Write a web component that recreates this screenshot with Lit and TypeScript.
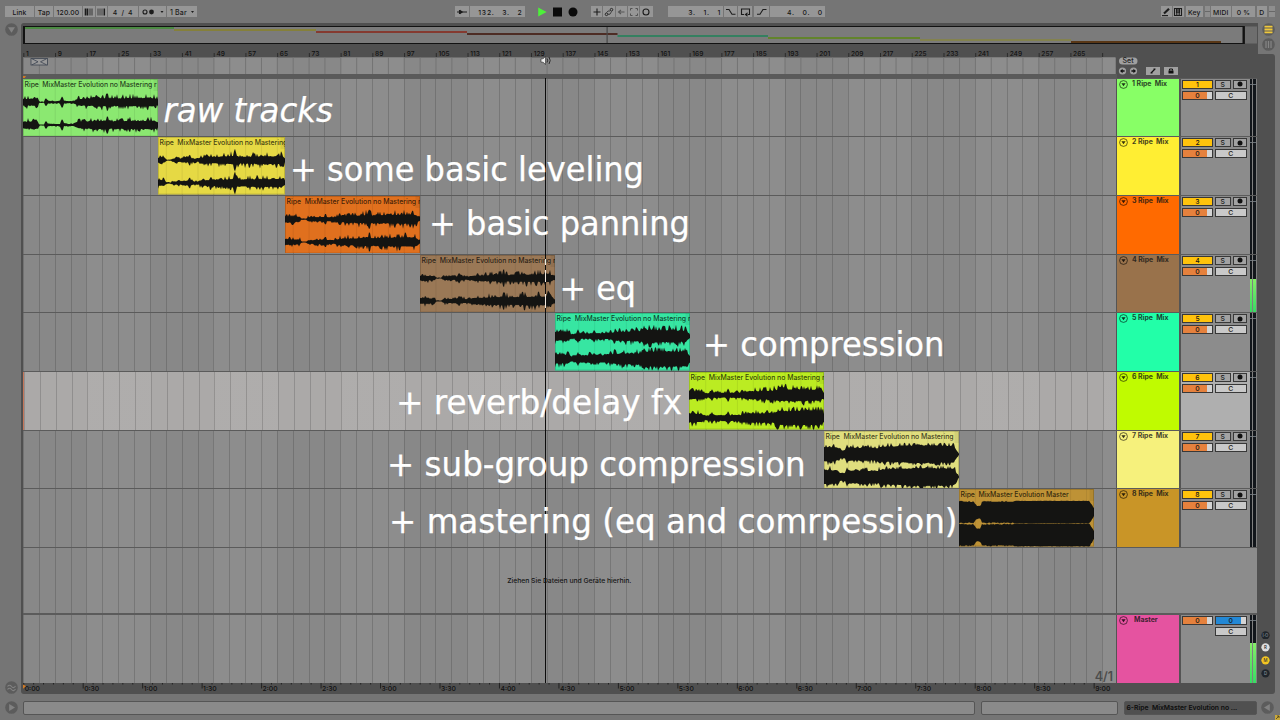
import { LitElement, html, svg, css, nothing } from "lit";
import { customElement, property } from "lit/decorators.js";

type Env = [number, number][];
interface Track {
  n: number; color: string; clip: string; x: number; end: number;
  title: string; titleW: number; top: Env; bottom?: Env; spikes: [number, number][]; jit: number; meter?: number;
}

const LEFT = 23;
const BAR8 = 31.73;
const NB = "\u00a0";
const FULL = `Ripe${NB} MixMaster Evolution no Mastering r`;

const quiet: Env = [[0, 4.4], [0.11, 4.4], [0.12, 0.6], [0.16, 0.6], [0.17, 1.6], [0.25, 1.2], [0.37, 1.2], [0.41, 4.2], [0.5, 4.8], [0.58, 5.4], [0.66, 4.8], [0.8, 5.2], [0.98, 5.2], [1, 3]];
const leveled: Env = [[0, 3.6], [0.05, 3.4], [0.07, 0.6], [0.1, 0.6], [0.12, 2.2], [0.17, 2.2], [0.25, 3.4], [0.28, 2], [0.32, 2], [0.34, 3.6], [0.52, 4.6], [0.6, 5.6], [0.65, 4.4], [0.8, 5.2], [0.98, 5.2], [1, 2.5]];
const panned: Env = [[0, 3.8], [0.11, 3.4], [0.12, 0.6], [0.16, 0.6], [0.17, 2.4], [0.3, 3], [0.36, 2.4], [0.4, 4], [0.55, 5], [0.62, 5.8], [0.65, 5], [0.8, 5.8], [0.96, 6.2], [1, 2]];

const tracks: Track[] = [
  { n: 1, color: "#88ff66", clip: "#8be871", x: 23, end: 158, title: FULL, titleW: 132, top: quiet, spikes: [[0.17, 4], [0.29, 6], [0.53, 6], [0.625, 10]], jit: 0.36 },
  { n: 2, color: "#ffee33", clip: "#e6d944", x: 158, end: 285, title: FULL, titleW: 132, top: leveled, spikes: [[0.25, 6], [0.605, 12]], jit: 0.42 },
  { n: 3, color: "#ff6a00", clip: "#e0701e", x: 285, end: 420, title: FULL, titleW: 134, top: panned, spikes: [[0.3, 6], [0.625, 11]], jit: 0.4 },
  { n: 4, color: "#99724b", clip: "#9a7856", x: 420, end: 555, title: FULL, titleW: 134, top: panned.map(([a, b]) => [a, b * 0.85]), bottom: panned, spikes: [[0.29, 5.5], [0.62, 10]], jit: 0.42, meter: 0.58 },
  { n: 5, color: "#22ffa8", clip: "#37e6a2", x: 555, end: 690, title: FULL, titleW: 134, top: [[0, 5.6], [0.1, 5], [0.12, 2], [0.16, 3.2], [0.4, 3.8], [0.45, 5.4], [0.62, 6.4], [0.68, 8], [0.97, 7], [1, 2]], bottom: [[0, 6], [0.1, 5.4], [0.12, 2.8], [0.16, 4.4], [0.4, 4.8], [0.45, 6.4], [0.62, 7], [0.67, 9.6], [0.97, 9.6], [1, 4]], spikes: [[0.17, 7], [0.29, 6.5], [0.66, 11]], jit: 0.34 },
  { n: 6, color: "#c0fb00", clip: "#bbec22", x: 689, end: 824, title: FULL, titleW: 134, top: [[0, 5.2], [0.1, 4.6], [0.12, 2], [0.16, 3.2], [0.38, 3.2], [0.42, 4.8], [0.62, 5.8], [0.68, 7.6], [0.97, 7.2], [1, 3]], bottom: [[0, 5.6], [0.1, 5], [0.12, 2.2], [0.16, 3.6], [0.38, 3.8], [0.42, 5.4], [0.62, 6], [0.67, 9], [0.97, 9.4], [1, 5]], spikes: [[0.17, 6], [0.29, 7]], jit: 0.36 },
  { n: 7, color: "#f6f17c", clip: "#e0de7e", x: 824, end: 959, title: `Ripe${NB} MixMaster Evolution no Mastering`, titleW: 128, top: [[0, 8.4], [0.1, 7.6], [0.12, 4.5], [0.16, 4.5], [0.17, 7.6], [0.4, 7.2], [0.43, 8.8], [0.62, 9.8], [0.68, 10.6], [0.96, 9.8], [1, 0.5]], spikes: [[0.17, 9.8], [0.29, 9.8]], jit: 0.24 },
  { n: 8, color: "#c99527", clip: "#be9236", x: 959, end: 1094, title: `Ripe${NB} MixMaster Evolution Master`, titleW: 108, top: [[0, 11], [0.11, 10.6], [0.13, 6.5], [0.16, 6.5], [0.17, 10.8], [0.4, 10.8], [0.41, 11.6], [0.965, 11.6], [1, 4]], spikes: [], jit: 0.06 },
];

const captions: [string, number, number, number, boolean?][] = [
  ["raw tracks", 163.5, 121.6, 169.500, true],
  ["+ some basic leveling", 290, 181, 354],
  ["+ basic panning", 429, 235, 261],
  ["+ eq", 559.500, 299.7, 76.500],
  ["+ compression", 703, 355.7, 241.500],
  ["+ reverb/delay fx", 396, 413.7, 286],
  ["+ sub-group compression", 387, 475.5, 418.500],
  ["+ mastering (eq and comrpession)", 389, 533.300, 568.500],
];

function envAt(env: Env, f: number): number {
  for (let i = 1; i < env.length; i++) {
    if (f <= env[i][0]) {
      const [a, va] = env[i - 1], [b, vb] = env[i];
      return va + ((vb - va) * (f - a)) / (b - a || 1);
    }
  }
  return env[env.length - 1][1];
}

function wavePath(env: Env, spikes: [number, number][], jit: number, w: number, cy: number, seed: number): string {
  let s = seed * 7919 + 13;
  const rnd = () => ((s = (s * 16807) % 2147483647) / 2147483647);
  const up: string[] = [], down: string[] = [];
  const step = 1;
  for (let x = 0; x <= w; x += step) {
    const f = x / w;
    let base = envAt(env, f);
    const spike = spikes.find(([p]) => Math.abs(p - f) * w < 1.2);
    if (spike) base = Math.max(base, spike[1] * (1 - Math.abs(spike[0] - f) * w * 0.3));
    const amount = spike ? 0 : jit;
    const k = (r: number) => Math.min(11.4, base * (1 + amount * (r * r * r * 2.4 - 0.7)));
    up.push(`${x.toFixed(1)} ${(cy - k(rnd())).toFixed(2)}`);
    down.unshift(`${x.toFixed(1)} ${(cy + k(rnd())).toFixed(2)}`);
  }
  return `M${up.join("L")}L${down.join("L")}Z`;
}

@customElement("audio-clip")
class AudioClip extends LitElement {
  @property({ attribute: false }) track!: Track;
  static styles = css`
    :host { display: block; height: 57.6px; }
    svg { display: block; overflow: hidden; }
    text { font: 500 6.9px Inter, "Open Sans", sans-serif; fill: #000; fill-opacity: .74; }
    .edge { fill: none; stroke: #000; stroke-opacity: .16; }
    .grid { stroke: #000; stroke-opacity: .07; }
  `;
  render() {
    const t = this.track, w = t.end - t.x;
    const lines: number[] = [];
    for (let x = LEFT + 0.5; x < t.end; x += BAR8 / 2) if (x > t.x + 1) lines.push(x - t.x);
    return html`<svg width=${w} height="57.6">
      <rect width=${w} height="57.6" fill=${t.clip}></rect>
      <rect x=${w - 4.5} width="4.5" height="12" fill="#000" fill-opacity=".06"></rect>
      ${lines.map((x) => svg`<line class="grid" x1=${x} x2=${x} y1="0" y2="58"></line>`)}
      <text x="1.6" y="7.9" textLength=${t.titleW}>${t.title}</text>
      <path d=${wavePath(t.top, t.spikes, t.jit, w, 23.2, t.n)} fill="#141412"></path>
      <path d=${wavePath(t.bottom ?? t.top, t.spikes, t.jit, w, 46, t.n + 20)} fill="#141412"></path>
      <rect class="edge" x=".5" y=".5" width=${w - 1} height="56.6"></rect>
    </svg>`;
  }
}

@customElement("level-meter")
class LevelMeter extends LitElement {
  @property({ type: Number }) level = 0;
  static styles = css`
    :host { display: flex; gap: 1px; background: #808080; padding-right: 1px; }
    .ch { flex: 1; background: #12161b; display: flex; flex-direction: column; justify-content: flex-end; }
    .tick { height: 1px; background: #687077; margin-bottom: auto; margin-top: 5px; }
    .fill { background: linear-gradient(#86ee68, #37dc63); }
  `;
  render() {
    const ch = html`<div class="ch"><div class="tick"></div>${this.level ? html`<div class="fill" style="height:${this.level * 100}%"></div>` : nothing}</div>`;
    return html`${ch}${ch}`;
  }
}

const ic = (w: number, body: unknown) => html`<svg width=${w} height="10" viewBox="0 0 ${w} 10" fill="none" stroke="#1c1c1c" stroke-width="1.1">${body}</svg>`;

const foldIcon = html`<svg class="fold" width="9" height="9" viewBox="0 0 9 9"><circle cx="4.5" cy="4.5" r="3.9" fill="none" stroke="#000" stroke-opacity=".65" stroke-width=".9"></circle><path d="M2.4 3.3h4.2L4.5 6.2z" fill="#000" fill-opacity=".8"></path></svg>`;

const toolbar: [number, number, unknown, string?][] = [
  [5, 34, "Link"], [35, 53, "Tap"], [54, 82, "120.00"],
  [83, 94.5, ic(11, svg`<path d="M2.5 1.5v7M4.5 1.5v7" stroke-width="1.6"></path><path d="M7 1.5v7M9 1.5v7" stroke-width=".8"></path>`)],
  [95.5, 106.5, ic(11, svg`<path d="M2 1.5v7M4 1.5v7M6 1.5v7" stroke-width=".7"></path><path d="M8.3 1.5v7" stroke-width="1.5"></path>`)],
  [107.5, 138, html`4 ${NB}/ ${NB}4`],
  [139, 166, ic(25, svg`<circle cx="5" cy="5" r="2"></circle><circle cx="11.5" cy="5" r="2.4" fill="#1c1c1c" stroke="none"></circle><path d="M20.5 4h3l-1.5 2z" fill="#1c1c1c" stroke="none"></path>`)],
  [167, 197, ic(28, svg`<text x="2" y="7.5" fill="#1c1c1c" stroke="none">1 Bar</text><path d="M23 4h3l-1.5 2z" fill="#1c1c1c" stroke="none"></path>`)],
  [455, 469, ic(12, svg`<path d="M1 5h10M3.5 3v4"></path><path d="M4 2.8L7.2 5L4 7.2z" fill="#1c1c1c" stroke="none"></path>`)],
  [470, 524.5, html`132. ${NB} 3. ${NB} 2`, "num"],
  [536, 548, ic(10, svg`<path d="M1.2.5L9.6 5L1.2 9.5z" fill="#4df03a" stroke="none"></path>`), "bare"],
  [552, 563, ic(9, svg`<rect y=".5" width="9" height="9" fill="#0a0a0a" stroke="none"></rect>`), "bare"],
  [567, 578, ic(10, svg`<circle cx="5" cy="5" r="4.5" fill="#0a0a0a" stroke="none"></circle>`), "bare"],
  [591, 602, ic(10, svg`<path d="M5 1.5v7M1.5 5h7"></path>`)],
  [603, 614.5, ic(10, svg`<circle cx="2.500" cy="7.300" r="1.300" stroke-width=".9"></circle><circle cx="7.500" cy="2.700" r="1.300" stroke-width=".9"></circle><path d="M2.500 5.700L4 4h2M4 7.200h2L7.500 4.500" stroke-width=".7"></path>`)],
  [615.5, 627, ic(10, svg`<path d="M2.5 5h6M5 3L2.5 5L5 7" stroke="#555"></path>`)],
  [628, 639, ic(10, svg`<path d="M1.500 3.500v-2h2M6.500 1.500h2v2M8.500 6.500v2h-2M3.500 8.500h-2v-2" stroke="#4a4a4a" stroke-width=".9"></path>`)],
  [640, 652.5, ic(10, svg`<circle cx="5" cy="5" r="3"></circle>`)],
  [668, 723, html`3. ${NB} 1. ${NB} 1`, "num"],
  [724, 737, ic(11, svg`<path d="M1 2.500h3L7 7.300h3.500"></path>`)],
  [738, 752, ic(11, svg`<path d="M4 7.500H1.500v-5.500h8v5.500H8"></path><path d="M7.500 5.200L4.500 7.500L7.500 9.800z" fill="#1c1c1c" stroke="none"></path>`)],
  [753.5, 768.5, ic(11, svg`<path d="M1 7.300h3L7 2.500h3.500"></path>`)],
  [770, 825, html`4. ${NB} 0. ${NB} 0`, "num"],
  [1161, 1171.5, ic(10, svg`<path d="M3 6.500L8 1.800" stroke-width="2.200"></path><path d="M1 8.600h6"></path>`)],
  [1173, 1183.5, ic(10, svg`<path d="M1.500 1.500h7v7h-7zM3.800 5v3.500M6.200 5v3.500"></path><path d="M3.800 1.500v4.500M6.200 1.500v4.500" stroke-width="1.700"></path>`)],
  [1185.5, 1203, "Key"], [1204.500, 1209.500, "", "split"], [1211, 1230.500, "MIDI"], [1232, 1255, "0 %"], [1256.500, 1267, "D"], [1268.500, 1274.500, "", "split"],
];

const overview: [number, number, string][] = [
  [23, 174, "#4c8a43"], [174, 316, "#85803a"], [316, 467, "#853a30"], [467, 617.5, "#4d2c24"],
  [617.5, 768, "#348060"], [768, 920, "#62842c"], [920, 1071, "#83824f"], [1071, 1221, "#593716"],
];

@customElement("app-root")
class AppRoot extends LitElement {
  static styles = css`
    :host { display: block; width: 1280px; height: 720px; overflow: hidden; background: #757575; font: 500 7px/1 Inter, "Open Sans", sans-serif; color: #161616; position: relative; }
    * { box-sizing: border-box; }
    svg { display: block; flex: none; }
    svg text { font: 500 7px Inter, "Open Sans", sans-serif; }
    .page { display: grid; grid-template-rows: 23px 671px 26px; height: 720px; }
    .toolbar { display: flex; padding-top: 6px; }
    .tb { height: 11px; background: #969696; display: flex; align-items: center; justify-content: center; white-space: pre; flex: none; font-size: 6.800px; line-height: 9px; padding-top: 1px; letter-spacing: .15px; }
    .tb.num { justify-content: flex-end; padding-right: 2px; font-size: 6.800px; letter-spacing: .75px; }
    .tb.bare { background: none; }
    .tb.split { background: linear-gradient(#8e8e8e 45%, #686868 45% 55%, #8e8e8e 55%); }
    .body { display: grid; grid-template-columns: 21px 1237px 22px; }
    .rail { display: flex; flex-direction: column; justify-content: space-between; padding: 0 0 0 5px; }
    .panel { background: #505050; border-radius: 3px 0 0 3px; padding: 3px 1px 0 2px; display: flex; flex-direction: column; }
    .side { display: flex; flex-direction: column; }
    .sideTop { height: 31px; padding-left: 4px; display: flex; flex-direction: column; gap: 2px; }
    .sideBody { flex: 1; width: 17px; background: #505050; border-radius: 0 3px 3px 0; display: flex; flex-direction: column; justify-content: flex-end; gap: 4px; padding: 0 0 16.500px 3px; }
    .ruler { display: grid; grid-template-columns: 1094px 140px; height: 32.500px; }
    .ruler > svg { overflow: visible; }
    .tools { padding: 12px 0 0 1px; }
    .rows { display: flex; flex-direction: column; height: 606px; }
    .row { display: grid; grid-template-columns: 1092.500px 1.500px 62px 1.500px 69px 7px; height: 58.700px; border-top: 1.500px solid #5b5b5b; flex: none; }
    .lane { background-color: #888; background-image: repeating-linear-gradient(90deg, #00000028 0 1px, transparent 1px 15.865px), repeating-linear-gradient(90deg, transparent 0 63.460px, #ffffff0b 63.460px 126.920px); overflow: hidden; }
    .row.on .lane { background-color: #aba9a8; border-left: 1px solid #c5765a; }
    .row.on .mixer { background: #afafaf; }
    .sep { background: #545454; }
    .head { padding: 1px 0 0 1.500px; display: flex; gap: 4.500px; font-weight: 700; font-size: 6.900px; white-space: pre; }
    .head span { padding-top: 1px; opacity: .82; }
    .mixer { background: #8c8c8c; padding: 1px 0 0 1.500px; display: grid; grid-template-columns: 31px 15.500px 14px; column-gap: 2px; row-gap: 2px; align-content: start; }
    .btn { height: 9px; border: 1px solid #383838; background: #a2a2a2; display: flex; align-items: center; justify-content: center; font-size: 6.800px; line-height: 7px; }
    .act { background: #ffc30c; }
    .vol { background: linear-gradient(90deg, #e5813d 83%, #d4d4d4 83%); }
    .cue { background: linear-gradient(90deg, #2388d5 83%, #d4d4d4 83%); }
    .pan { background: #c9c9c9; }
    .wide { grid-column: span 2; }
    .start2 { grid-column: 2 / span 2; }
    .drop { height: 66.400px; }
    .drop .lane { display: flex; align-items: center; justify-content: center; padding-top: 1px; }
    .dropText { font-size: 6.800px; letter-spacing: -.02px; white-space: pre; }
    .blank { background: #8c8c8c; grid-column: span 4; }
    .master { height: 70px; border-top-width: 2px; }
    .master .lane { display: flex; justify-content: flex-end; align-items: flex-end; padding: 0 2.500px 0 0; font: 600 12.500px/12px Inter, sans-serif; color: #4c4c4c; }
    .master .head span { padding-left: 2px; }
    .footer { display: flex; padding: 7px 0 0 5px; align-items: flex-start; }
    .field { height: 13.500px; border: 1.500px solid #555; border-radius: 2px; background: #8a8a8a; flex: none; }
    .f1 { width: 952px; margin-left: 5px; }
    .f2 { width: 137px; margin-left: 6px; }
    .f3 { width: 133px; margin-left: 5.500px; background: #505050; padding: 3px 2px; font-weight: 600; font-size: 6.800px; color: #0d0d0d; white-space: pre; letter-spacing: 0; }
    .f4 { margin-left: 4.500px; }
    .overlay { position: absolute; left: 0; top: 0; pointer-events: none; }
    .cap { font: 33px "DejaVu Sans", sans-serif; fill: #fff; stroke: #fff; stroke-width: .25px; }
    .cap.it { font-style: italic; }
  `;

  private overviewBar() {
    return html`<svg width="1234" height="19" viewBox="23 26 1234 19">
      <rect x="1245" y="26.500" width="12" height="17" fill="#6e6e6e"></rect>
      <rect x="23.500" y="26.500" width="1220.500" height="17" fill="#7b7b7b" stroke="#121212"></rect>
      ${overview.map(([a, b, c], i) => svg`<rect x=${a} y=${27 + i * 2} width=${b - a} height="2" fill=${c}></rect>`)}
      <rect x="23" y="26" width="2" height="18" fill="#121212"></rect><rect x="1242.500" y="26" width="2.200" height="18" fill="#121212"></rect>
      <rect x="606.500" y="27" width="1.200" height="16" fill="#484848"></rect>
    </svg>`;
  }

  private barRuler() {
    const marks = Array.from({ length: 35 }, (_, i) => i);
    const grid = Array.from({ length: 69 }, (_, i) => i);
    return html`<svg width="1094" height="33.5" viewBox="23 45 1094 33.5">
      <rect x="23" y="57.500" width="1092.500" height="16.500" fill="#888"></rect>
      ${grid.filter((i) => i % 8 === 4).map((i) => svg`<rect x=${23 + (i * BAR8) / 2} y="57.500" width=${Math.min(63.5, 1092.5 - (i * BAR8) / 2)} height="16.500" fill="#8d8d8d"></rect>`)}
      ${grid.map((i) => svg`<rect x=${23 + (i * BAR8) / 2} y="57.500" width="1" height="16.500" fill="#747474"></rect>`)}
      <rect x="23" y="74" width="1094" height="4.500" fill="#5a5a5a"></rect>
      ${marks.map((i) => svg`<rect x=${23.3 + i * BAR8} y="53" width="1" height="4" fill="#2c2c2c"></rect>${i < 34 ? svg`<text x=${26 + i * BAR8} y="55.800" fill="#101010" style="font-size:6.6px">${1 + i * 8}</text>` : nothing}`)}
      <g fill="none" stroke="#3c4450" stroke-width=".8"><rect x="31" y="58.500" width="16.500" height="6.500" fill="#999"></rect><path d="M32 58.800l6 3l-6 3M46.500 58.800l-6 3l6 3"></path></g>
      <path d="M23 76h3l-1.500 2.500H23z" fill="#d27b26"></path>
    </svg>`;
  }

  private setTools() {
    return html`<svg width="64" height="20" viewBox="1118 57 64 20">
      <rect x="1119" y="57.500" width="18.500" height="7" rx="3.500" fill="#a0a0a0"></rect><text x="1122.500" y="63.400" fill="#222">Set</text>
      <circle cx="1122.500" cy="71" r="3.600" fill="#a0a0a0"></circle><circle cx="1133.500" cy="71" r="3.600" fill="#a0a0a0"></circle>
      <path d="M1120 71l2.600-2.200v1.400h2v1.600h-2v1.400zM1136 71l-2.600-2.200v1.400h-2v1.600h2v1.400z" fill="#111"></path>
      <rect x="1146" y="67" width="14" height="8" fill="#a0a0a0"></rect><path d="M1151 73l4-4M1150.500 73h2M1153.500 69h2" stroke="#111" stroke-width="1.200"></path>
      <rect x="1164" y="67" width="14" height="8" fill="#a0a0a0"></rect><path d="M1168.500 70.500h5v3h-5z" fill="#111"></path><path d="M1169.500 70.500v-1.500h3v1.500" fill="none" stroke="#111"></path>
    </svg>`;
  }

  private timeRuler() {
    const step = 59.47;
    const fmt = (i: number) => `${Math.floor(i / 2)}:${i % 2 ? "30" : "00"}`;
    return html`<svg width="1234" height="11" viewBox="23 683 1234 11">
      ${Array.from({ length: 109 }, (_, i) => svg`<rect x=${23.2 + (i * step) / 6} y="683" width="1" height=${i % 6 ? 1.5 : 5.5} fill="#222"></rect>`)}
      ${Array.from({ length: 19 }, (_, i) => svg`<text x=${24.7 + i * step} y="690.800" fill="#101010" style="font-size:6.8px">${fmt(i)}</text>`)}
      <path d="M22 684l4 2l-3 3z" fill="#d27b26"></path>
    </svg>`;
  }

  private round(body: unknown) {
    return html`<svg width="13" height="13" viewBox="0 0 13 13"><circle cx="6.500" cy="6.500" r="6.300" fill="#5c5c5c"></circle>${body}</svg>`;
  }

  private trackRow(t: Track) {
    return html`<div class="row ${t.n === 6 ? "on" : ""}">
      <div class="lane"><audio-clip .track=${t} style="margin-left:${t.x - LEFT - (t.n === 6 ? 1 : 0)}px"></audio-clip></div>
      <div class="sep"></div>
      <div class="head" style="background:${t.color}">${foldIcon}<span>${t.n} Ripe${NB} Mix</span></div>
      <div class="sep"></div>
      <div class="mixer">
        <div class="btn act">${t.n}</div><div class="btn">S</div>
        <div class="btn"><svg width="6" height="6"><circle cx="3" cy="3" r="2.500" fill="#101010"></circle></svg></div>
        <div class="btn vol">0</div><div class="btn pan wide">C</div>
      </div>
      <level-meter .level=${t.meter ?? 0}></level-meter>
    </div>`;
  }

  render() {
    let cursor = 0;
    return html`<div class="page">
      <div class="toolbar">${toolbar.map(([a, b, c, k]) => {
        const gap = a - cursor;
        cursor = b;
        return html`<div class="tb ${k ?? ""}" style="margin-left:${gap}px;width:${b - a}px">${c}</div>`;
      })}</div>
      <div class="body">
        <div class="rail">
          ${this.round(svg`<path d="M3 4.200h7L6.500 9.800z" fill="#828282"></path>`)}
          ${this.round(svg`<path d="M2.500 5.500q2-2.500 4 0t4-.5M2.500 8.500q2-2.500 4 0t4-.5" fill="none" stroke="#828282" stroke-width="1.200"></path>`)}
        </div>
        <div class="panel">
          ${this.overviewBar()}
          <div class="ruler">${this.barRuler()}<div class="tools">${this.setTools()}</div></div>
          <div class="rows">
            ${tracks.map((t) => this.trackRow(t))}
            <div class="row drop"><div class="lane"><span class="dropText">Ziehen Sie Dateien und Geräte hierhin.</span></div><div class="sep"></div><div class="blank"></div></div>
            <div class="row master">
              <div class="lane">4/1</div><div class="sep"></div>
              <div class="head" style="background:#e553a0">${foldIcon}<span>Master</span></div><div class="sep"></div>
              <div class="mixer"><div class="btn vol">0</div><div class="btn cue wide">0</div><div class="btn pan start2">C</div></div>
              <level-meter .level=${0.6}></level-meter>
            </div>
            ${this.timeRuler()}
          </div>
        </div>
        <div class="side">
          <div class="sideTop">
            ${this.round(svg`<path d="M2.500 3.600h8M2.500 6.500h8M2.500 9.400h8" stroke="#f0c83a" stroke-width="1.900"></path>`)}
            ${this.round(svg`<path d="M4 3v7M6.500 3v7M9 3v7" stroke="#858585" stroke-width="1.200"></path>`)}
          </div>
          <div class="sideBody">
            ${[["#20262c", "I·O", "#8b929a"], ["#dedede", "R", "#222"], ["#f3c522", "M", "#333"], ["#20262c", "D", "#8b929a"]].map(([bg, l, fg]) => html`<svg width="9" height="8.700" viewBox="0 0 9 9"><circle cx="4.500" cy="4.500" r="4.300" fill=${bg}></circle><text x="4.500" y="6.200" text-anchor="middle" fill=${fg} style="font-size:4.500px">${l}</text></svg>`)}
          </div>
        </div>
      </div>
      <div class="footer">
        ${this.round(svg`<path d="M4.200 3v7L10 6.500z" fill="#828282"></path>`)}
        <div class="field f1"></div><div class="field f2"></div>
        <div class="field f3">6-Ripe${NB} MixMaster Evolution no ...</div>
        <div class="f4">${this.round(svg`<path d="M8.800 3v7L3 6.500z" fill="#828282"></path>`)}</div>
      </div>
    </div>
    <svg class="overlay" width="1280" height="720">
      <rect x="545" y="78" width="1" height="605" fill="#0c0c0c"></rect>
      <path d="M545.500 259v6M545.500 270v12M545.500 294v14" stroke="#efe6dc"></path>
      <path d="M541 58.800h2l2.500-2.300v8l-2.500-2.300h-2z" fill="#eee" stroke="#222" stroke-width=".6"></path>
      <path d="M547 58.500q1.300 2 0 4M549 57q2.400 3.500 0 7" fill="none" stroke="#222" stroke-width=".9"></path>
      <path d="M1275 715h5v5h-5z" fill="#c9a83a"></path><path d="M1276 719l3-3M1279 718v-2h-2" stroke="#4a4020" stroke-width=".8" fill="none"></path>
      ${captions.map(([s, x, y, w, it]) => svg`<text class="cap ${it ? "it" : ""}" x=${x} y=${y} textLength=${w} lengthAdjust="spacingAndGlyphs">${s}</text>`)}
    </svg>`;
  }
}
